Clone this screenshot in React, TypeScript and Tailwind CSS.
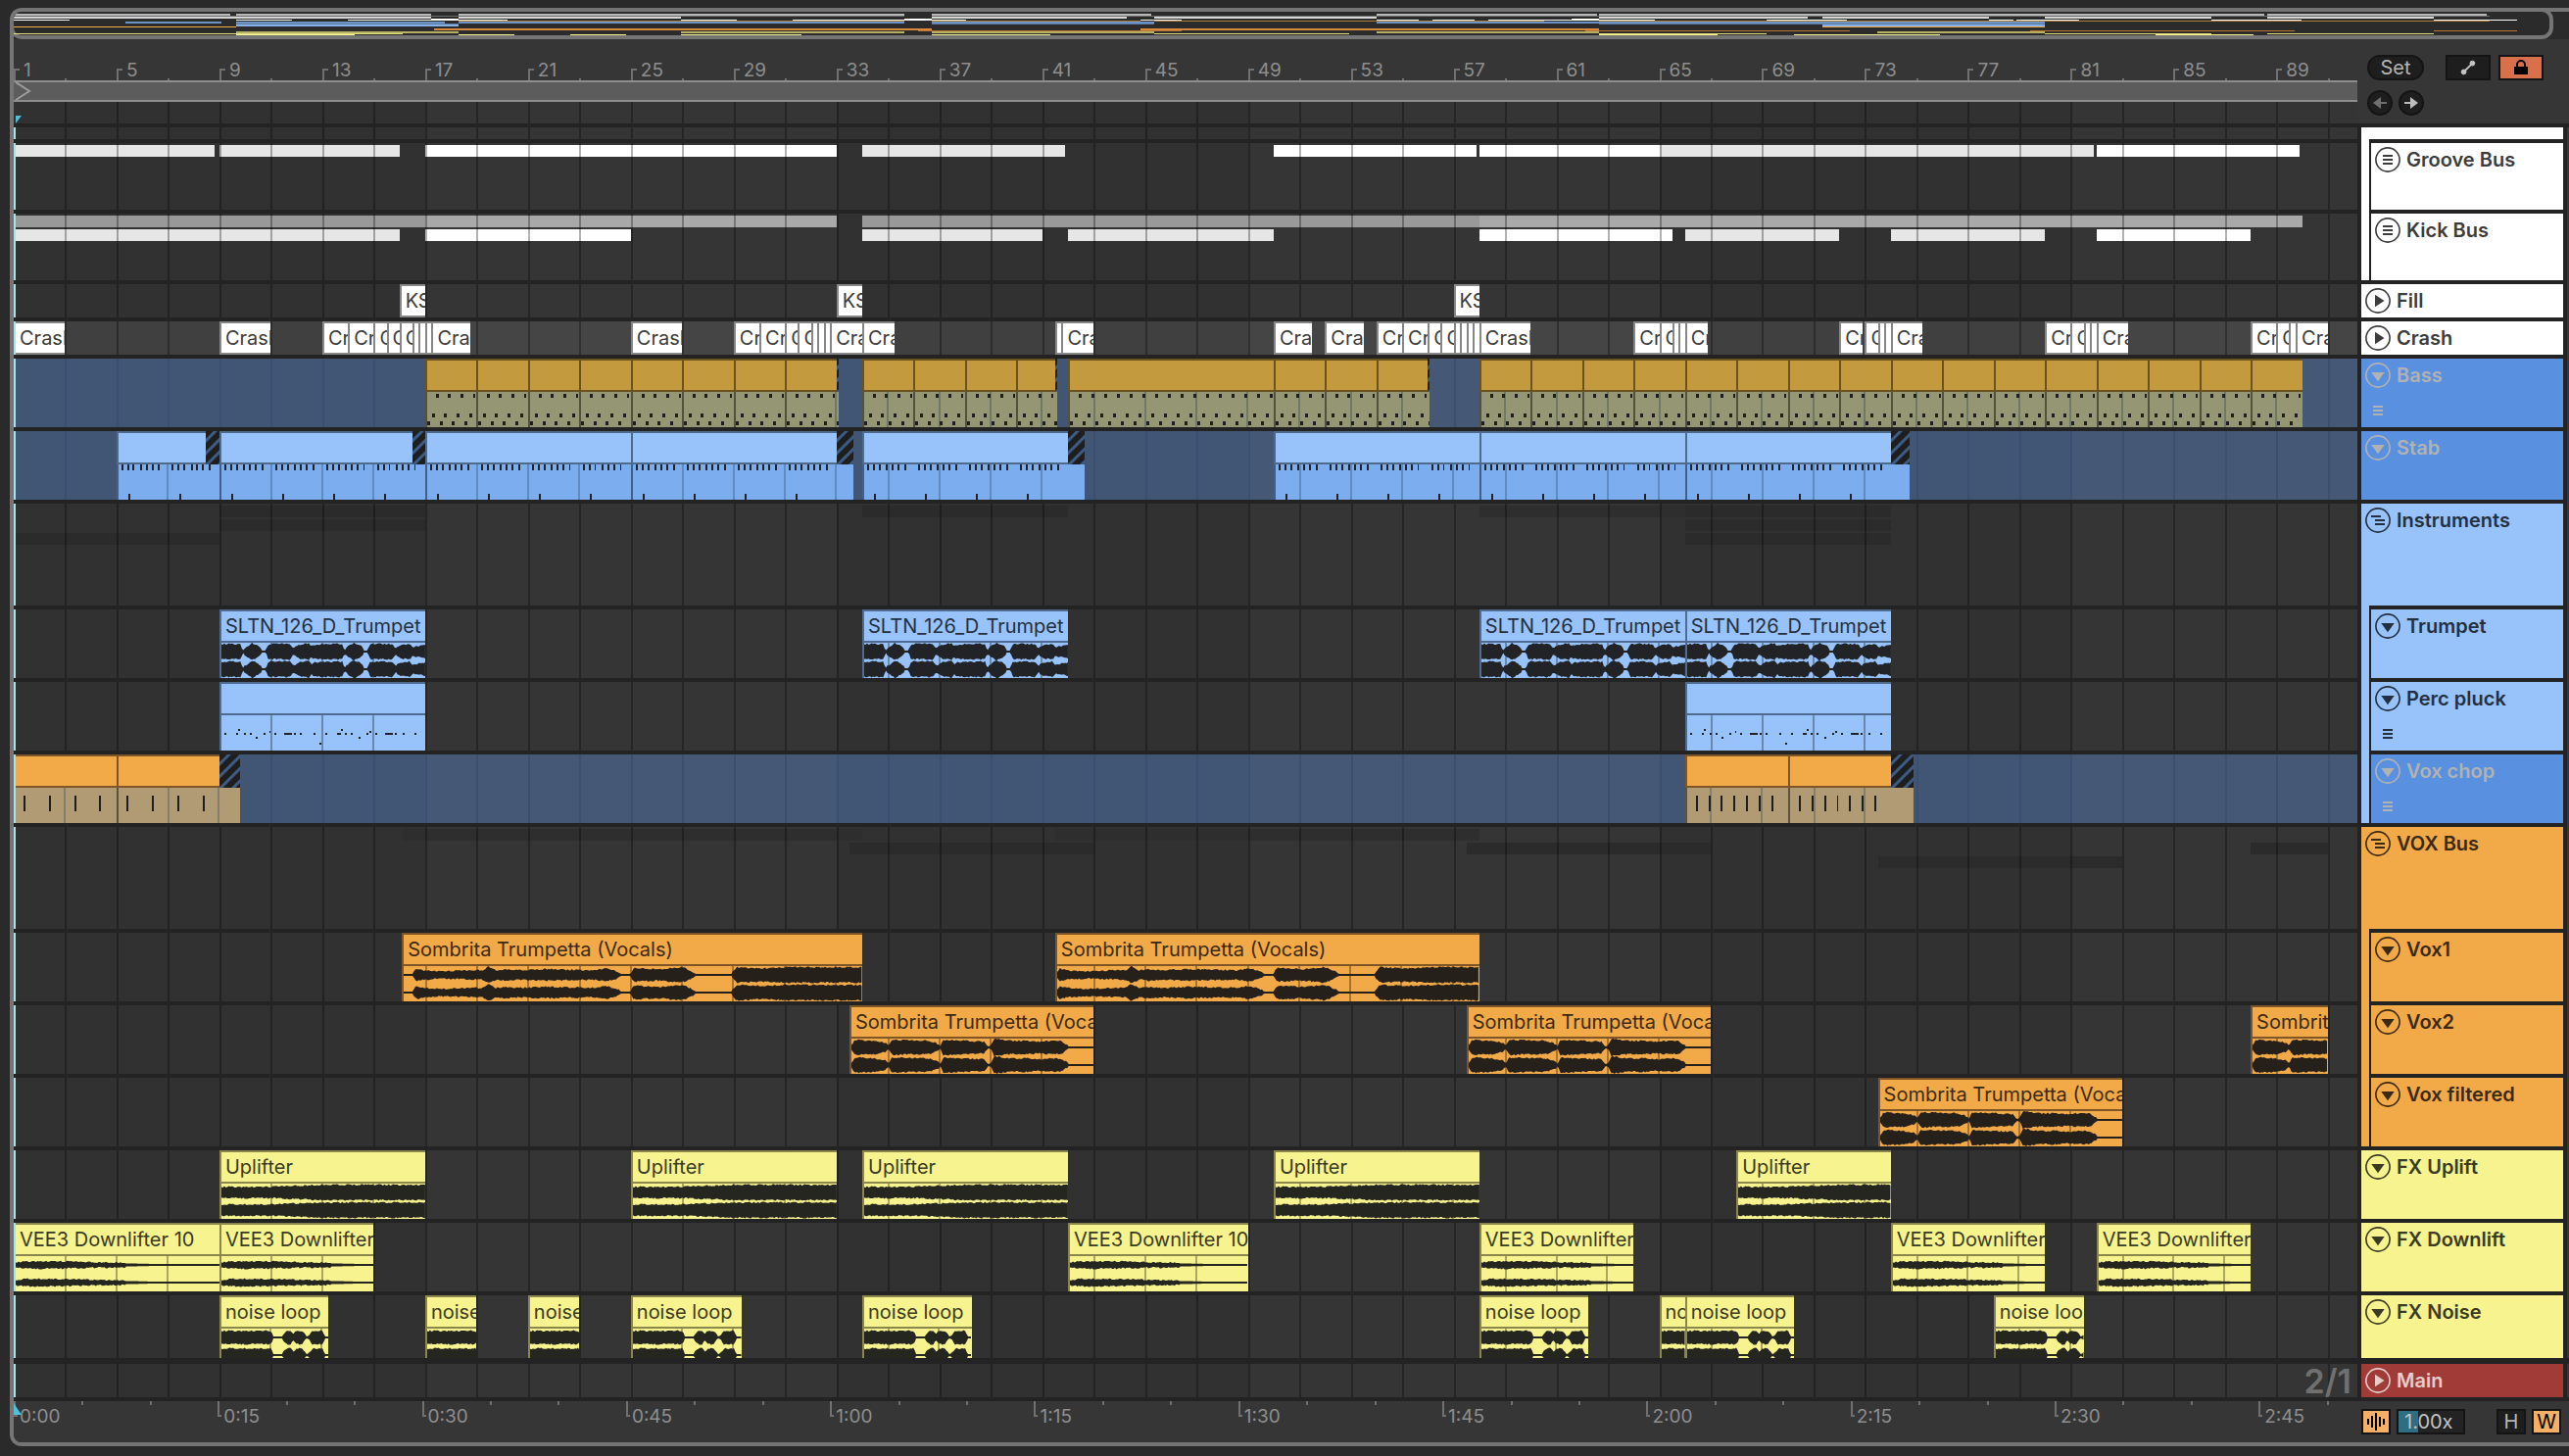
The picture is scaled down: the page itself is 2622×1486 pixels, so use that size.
import type { ReactNode } from 'react'

const BARS = 91.15
const BAR = 26.25 // drawing units per bar inside clip artwork

const pct = (bars: number) => `${(bars / BARS) * 100}%`

type Span = { at: number; len: number; tail?: number; name?: string; offset?: number }
type Tone = 'white' | 'gold' | 'sky' | 'skyMuted' | 'orange' | 'orangeMuted' | 'yellow'
type Art = 'bass' | 'stab' | 'trumpet' | 'pluck' | 'chop' | 'chopFast' | 'vox' | 'voxShort' | 'uplift' | 'downlift' | 'noise'

const tones: Record<Tone, { head: string; edge: string; body: string; bodyEdge: string; line: string; text: string; ink: string }> = {
  white: { head: 'bg-white', edge: 'border-[#878787]', body: 'bg-white', bodyEdge: 'border-[#878787]', line: 'bg-black/30', text: 'text-[#3c3c3c]', ink: 'fill-[#222]' },
  gold: { head: 'bg-[#c49a3f]', edge: 'border-[#6b5220]', body: 'bg-[#959674]', bodyEdge: 'border-[#52523c]', line: 'bg-[#6f7a66]', text: 'text-[#3d2e10]', ink: 'fill-[#1e1e1e]' },
  sky: { head: 'bg-[#98c2fa]', edge: 'border-[#4f6b8f]', body: 'bg-[#98c2fa]', bodyEdge: 'border-[#4f6b8f]', line: 'bg-[#6a87ae]', text: 'text-[#24303f]', ink: 'fill-[#212327]' },
  skyMuted: { head: 'bg-[#98c2fa]', edge: 'border-[#4f6b8a]', body: 'bg-[#7cadef]', bodyEdge: 'border-[#415f8a]', line: 'bg-[#5f8ac2]', text: 'text-[#24303f]', ink: 'fill-[#212327]' },
  orange: { head: 'bg-[#f2a948]', edge: 'border-[#7e5526]', body: 'bg-[#f2a948]', bodyEdge: 'border-[#7e5526]', line: 'bg-[#a67432]', text: 'text-[#3b2a12]', ink: 'fill-[#26201a]' },
  orangeMuted: { head: 'bg-[#f2a948]', edge: 'border-[#7e5526]', body: 'bg-[#b09b74]', bodyEdge: 'border-[#5e523e]', line: 'bg-[#848068]', text: 'text-[#3b2a12]', ink: 'fill-[#1e1e1e]' },
  yellow: { head: 'bg-[#f7f38f]', edge: 'border-[#8a864c]', body: 'bg-[#f7f38f]', bodyEdge: 'border-[#8a864c]', line: 'bg-[#aaa763]', text: 'text-[#3b3a22]', ink: 'fill-[#25261f]' },
}

// Amplitude envelopes as [bar, height] points
const envelopes: Record<string, [number, number][]> = {
  trumpet: [[0, 7], [0.75, 7], [0.83, 1], [1, 4], [1.2, 8], [1.45, 5], [1.6, 1], [1.75, 1], [1.85, 7], [2.7, 7], [2.83, 2], [3, 6], [3.45, 8], [3.52, 4], [3.6, 6], [4, 7], [4.75, 7], [4.83, 1], [5, 5], [5.2, 8], [5.45, 6], [5.6, 1], [5.75, 1], [5.85, 7], [6.7, 7], [6.83, 2], [7, 6], [7.4, 7], [7.5, 4], [8, 6]],
  vox: [[0, 1], [0.35, 1], [0.5, 6], [0.75, 4], [1.5, 3], [3.1, 4], [3.3, 8], [3.6, 4], [4, 5], [4.5, 4], [5.5, 5], [7.4, 4], [7.9, 6], [8.2, 4], [8.5, 1], [8.85, 1], [9, 6], [10, 5], [10.8, 7], [11, 6], [11.4, 1], [12.8, 1], [13, 7], [14, 6], [15, 7], [18, 7]],
  voxShort: [[0, 2], [0.15, 7], [0.9, 6], [1.35, 4], [1.45, 1], [1.6, 7], [2.5, 6], [3, 6], [3.3, 4], [3.5, 1], [3.6, 7], [4.5, 6], [5.2, 5], [5.35, 1], [5.5, 2], [5.6, 8], [6.2, 6], [7, 6], [7.4, 5], [7.6, 6], [8.2, 6], [8.5, 1], [9.5, 1]],
  uplift: [[0, 5], [2, 5], [4, 7], [8, 7]],
  downlift: [[0, 2], [0.5, 3], [1.5, 3], [3, 2], [4.3, 1.6], [5.5, 1], [8, 1]],
  noise: [[0, 6], [1.95, 6], [2.05, 1], [2.4, 1], [2.6, 6], [2.75, 6], [2.85, 2], [2.95, 6], [3.2, 6], [3.35, 1], [3.5, 2], [3.6, 6], [4, 6], [4.1, 1], [5, 1]],
}

function wavePath(points: [number, number][], span: number, center: number, offset: number) {
  const top: string[] = []
  const bottom: string[] = []
  const width = span * BAR
  for (let x = 0; x <= width; x += 1.5) {
    const bar = x / BAR + offset
    let i = 0
    while (i < points.length - 2 && points[i + 1][0] < bar) i++
    const [b0, a0] = points[i]
    const [b1, a1] = points[i + 1]
    const amp = a0 + (a1 - a0) * Math.min(1, (bar - b0) / (b1 - b0))
    const noise = (seed: number) => (amp > 1.6 ? Math.abs(Math.sin(x * seed + center) * 43.7) % 1.6 : 0)
    top.push(`${x.toFixed(1)},${(center - amp - noise(12.9)).toFixed(1)}`)
    bottom.unshift(`${x.toFixed(1)},${(center + amp + noise(7.3)).toFixed(1)}`)
  }
  return `M${top.join('L')}L${bottom.join('L')}Z`
}

const pluckNotes = [
  [3, 19, 2], [15, 19, 2], [17, 15, 2], [23, 19, 2], [29, 19, 2], [35, 23, 2], [43, 19, 2], [49, 17, 2], [55, 19, 2],
  [65, 19, 8], [75, 19, 2], [81, 19, 2], [95, 19, 2], [101, 29, 2], [107, 19, 2], [119, 19, 4], [123, 15, 2], [127, 19, 2],
  [133, 19, 2], [141, 23, 2], [149, 19, 2], [153, 17, 2], [159, 19, 2], [169, 19, 8], [179, 19, 2], [187, 19, 2], [199, 19, 2],
]

function notes(art: Art, span: number) {
  const out: number[][] = []
  if (art === 'bass') {
    for (let b = 0; b < span - 0.05; b += 0.5) {
      out.push([b * BAR + 9, 2, 3, 4], [b * BAR + 5, 22, 3, 4], [b * BAR, 30, 3, 4])
    }
  } else if (art === 'stab') {
    for (let b = 0; b < span - 0.8; b += 2) {
      for (const n of [0.1, 0.34, 0.56, 0.86, 1.08, 1.32, 1.56]) {
        if (b + n < span) out.push([(b + n) * BAR, 0, 2, 6])
      }
      out.push([(b + 0.4) * BAR, 30, 2, 6])
    }
  } else if (art === 'chop') {
    for (let b = 0; b < span - 0.9; b++) out.push([(b + 0.32) * BAR, 8, 2, 16])
  } else if (art === 'chopFast') {
    for (let n = 0; n < 7; n++) out.push([(n / 2 + 0.34) * BAR, 8, 2, 16])
  } else if (art === 'pluck') {
    pluckNotes.forEach(([x, y, w]) => out.push([x, y - 1, w, 2]))
  }
  return out
}

function Artwork({ art, span, ink, offset = 0 }: { art: Art; span: number; ink: string; offset?: number }) {
  const wave = envelopes[art]
  return (
    <svg
      className={`absolute left-0 top-0 h-9 w-full ${ink}`}
      viewBox={`0 0 ${span * BAR} 36`}
      preserveAspectRatio="none"
      aria-hidden="true"
    >
      {wave ? (
        <>
          <path d={wavePath(wave, span, 9, offset)} />
          <path d={wavePath(wave, span, 27, offset)} />
        </>
      ) : (
        notes(art, span).map(([x, y, w, h], i) => <rect key={i} x={x} y={y} width={w} height={h} shapeRendering="crispEdges" />)
      )}
    </svg>
  )
}

function Clip({ clip, tone, art }: { clip: Span; tone: Tone; art?: Art }) {
  const t = tones[tone]
  const span = clip.len + (clip.tail ?? 0)
  const box = { left: pct(clip.at), width: pct(span) }

  if (!art) {
    return (
      <div className={`absolute inset-y-0 overflow-hidden whitespace-nowrap border-y-2 border-l-2 pl-1 leading-[30px] ${t.head} ${t.edge} ${t.text}`} style={box}>
        {clip.name}
      </div>
    )
  }

  const lines: number[] = []
  for (let b = Math.floor(clip.at / 2) * 2 + 2; b < clip.at + span - 0.05; b += 2) lines.push(b)

  return (
    <div className="absolute inset-y-0 flex flex-col" style={box}>
      <div className="flex h-[34px] shrink-0">
        <div
          className={`overflow-hidden whitespace-nowrap border-y-2 border-l-2 pl-1 leading-[30px] ${t.head} ${t.edge} ${t.text}`}
          style={{ width: `${(clip.len / span) * 100}%` }}
        >
          {clip.name}
        </div>
        {clip.tail && (
          <div className="flex-1 bg-[repeating-linear-gradient(135deg,#1e1e1e_0px,#1e1e1e_5px,#3d5b82_6px,#3d5b82_8px,#1e1e1e_9px)]" />
        )}
      </div>
      <div className={`relative flex-1 overflow-hidden border-l-2 ${t.body} ${t.bodyEdge}`}>
        {lines.map((b) => (
          <span key={b} className={`absolute inset-y-0 -ml-0.5 w-0.5 ${t.line}`} style={{ left: `${((b - clip.at) / span) * 100}%` }} />
        ))}
        <Artwork art={art} span={span} ink={t.ink} offset={clip.offset} />
      </div>
    </div>
  )
}

const gridBars = Array.from({ length: 45 }, (_, i) => (i + 1) * 2)
const shades = [0, 16, 32, 48, 64, 80]

type LaneKind = 'plain' | 'light' | 'blue'

const laneColors: Record<LaneKind, { odd: string; even: string; line: string }> = {
  plain: { odd: 'bg-[#313131]', even: 'bg-[#353535]', line: 'bg-black/30' },
  light: { odd: 'bg-[#404040]', even: 'bg-[#454545]', line: 'bg-black/30' },
  blue: { odd: 'bg-[#415674]', even: 'bg-[#455977]', line: 'bg-[#3b5070]' },
}

function Lane({ height, kind = 'plain', playhead = true, strips, children }: { height: string; kind?: LaneKind; playhead?: boolean; strips?: ReactNode; children?: ReactNode }) {
  const c = laneColors[kind]
  return (
    <div className={`relative overflow-hidden ${height}`}>
      {shades.map((b, i) => (
        <div key={b} className={`absolute inset-y-0 ${i % 2 ? c.even : c.odd}`} style={{ left: pct(b), width: pct(16) }} />
      ))}
      {strips}
      {gridBars.map((b) => (
        <div key={b} className={`absolute inset-y-0 w-0.5 ${c.line}`} style={{ left: pct(b) }} />
      ))}
      {children}
      {playhead && <div className="absolute inset-y-0 left-0 w-0.5 bg-[#a6e3ee]" />}
    </div>
  )
}

type Strip = [start: number, end: number, row: number, color: string]

function Strips({ items }: { items: Strip[] }) {
  const rows = ['top-0.5', 'top-4', 'top-[30px]']
  return items.map(([start, end, row, color], i) => (
    <div key={i} className={`absolute h-3 ${rows[row]} ${color}`} style={{ left: pct(start), width: pct(end - start) }} />
  ))
}

const pale = 'bg-[#e6e6e6]'
const full = 'bg-white'
const shadow = 'bg-[#2b2b2b]'

const groove: Strip[] = [
  [0, 7.8, 0, pale], [8, 15, 0, pale], [16, 32, 0, full], [33, 40.9, 0, pale],
  [49, 56.9, 0, full], [57, 64, 0, full], [64, 80.9, 0, pale], [81, 88.9, 0, full],
]
const kickTop: Strip[] = [
  [0, 16, 0, 'bg-[#999]'], [16, 32, 0, 'bg-[#a9a9a9]'], [33, 57, 0, 'bg-[#999]'], [57, 89, 0, 'bg-[#a9a9a9]'],
]
const kick: Strip[] = [
  [0, 15, 1, pale], [16, 24, 1, full], [33, 40, 1, pale], [41, 49, 1, pale],
  [57, 64.5, 1, full], [65, 71, 1, pale], [73, 79, 1, pale], [81, 87, 1, full],
]
const instrumentStrips: Strip[] = [
  [0, 8, 2, shadow], [8, 16, 0, shadow], [8, 16, 1, shadow], [33, 41, 0, shadow],
  [57, 65, 0, 'bg-[#2e2e2e]'], [65, 73, 0, shadow], [65, 73, 1, shadow], [65, 73, 2, shadow],
]
const voxStrips: Strip[] = [
  [15.1, 33, 0, 'bg-[#2e2e2e]'], [40.5, 57, 0, 'bg-[#2e2e2e]'], [32.5, 42, 1, shadow],
  [56.5, 66, 1, shadow], [72.5, 82, 2, shadow], [87, 90, 1, shadow],
]

const named = (name: string, spans: [number, number][]): Span[] => spans.map(([at, end]) => ({ at, len: end - at, name }))

const fillClips = named('KSHMR', [[15, 16], [32, 33], [56, 57]])
const crashClips = [
  ...named('Crash', [
    [0, 2], [8, 10], [12, 13], [13, 14], [14, 14.5], [14.5, 15], [15, 15.5], [16.25, 17.75], [24, 26], [28, 29], [29, 30],
    [30, 30.5], [30.5, 31], [31.75, 33], [33, 34.25], [40.75, 42], [49, 50.5], [51, 52.5], [53, 54], [54, 55], [55, 55.5],
    [55.5, 56], [57, 59], [63, 64], [64, 64.5], [65, 65.9], [71, 71.9], [72, 72.5], [73, 74.25], [79, 80], [80, 80.5],
    [81, 82.25], [87, 88], [88, 88.5], [88.75, 90],
  ]),
  ...named('', [
    [15.5, 15.75], [15.75, 16], [16, 16.25], [31, 31.25], [31.25, 31.5], [31.5, 31.75], [40.5, 40.75], [56, 56.25],
    [56.25, 56.5], [56.5, 56.75], [56.75, 57], [64.5, 64.75], [64.75, 65], [72.5, 72.75], [72.75, 73], [80.5, 80.75],
    [80.75, 81], [88.5, 88.75],
  ]),
]

const pairs = (from: number, count: number): Span[] => Array.from({ length: count }, (_, i) => ({ at: from + i * 2, len: 2 }))
const bassClips: Span[] = [
  ...pairs(16, 7), { at: 30, len: 2, tail: 0.08 },
  ...pairs(33, 3), { at: 39, len: 1.5, tail: 0.08 },
  { at: 41, len: 8 }, ...pairs(49, 2), { at: 53, len: 2, tail: 0.08 },
  ...pairs(57, 16),
]
const stabClips: Span[] = [
  { at: 4, len: 3.45, tail: 0.55 }, { at: 8, len: 7.5, tail: 0.5 }, { at: 16, len: 8 }, { at: 24, len: 8, tail: 0.65 },
  { at: 33, len: 8, tail: 0.65 }, { at: 49, len: 8 }, { at: 57, len: 8 }, { at: 65, len: 8, tail: 0.75 },
]
const trumpetClips = named('SLTN_126_D_Trumpet', [[8, 16], [33, 41], [57, 65], [65, 73]])
const pluckClips: Span[] = [{ at: 8, len: 8 }, { at: 65, len: 8 }]
const chopClips: Span[] = [{ at: 0, len: 4 }, { at: 4, len: 4, tail: 0.8 }]
const chopFastClips: Span[] = [{ at: 65, len: 4 }, { at: 69, len: 4, tail: 0.9 }]
const vox1Clips: Span[] = [
  { at: 15.1, len: 17.9, name: 'Sombrita Trumpetta (Vocals)' },
  { at: 40.5, len: 16.5, name: 'Sombrita Trumpetta (Vocals)', offset: 0.4 },
]
const vox2Clips = named('Sombrita Trumpetta (Vocals)', [[32.5, 42], [56.5, 66], [87, 90]])
const voxFilteredClips = named('Sombrita Trumpetta (Vocals)', [[72.5, 82]])
const upliftClips = named('Uplifter', [[8, 16], [24, 32], [33, 41], [49, 57], [67, 73]])
const downliftClips = named('VEE3 Downlifter 10', [[0, 8], [8, 14], [41, 48], [57, 63], [73, 79], [81, 87]])
const noiseClips = named('noise loop', [[8, 12.25], [16, 18], [20, 22], [24, 28.3], [33, 37.25], [57, 61.25], [64, 65], [65, 69.25], [77, 80.5]])

function Clips({ items, tone, art }: { items: Span[]; tone: Tone; art?: Art }) {
  return items.map((clip) => <Clip key={clip.at} clip={clip} tone={tone} art={art} />)
}

const fromStrips = (items: Strip[]): Span[] => items.map(([start, end]) => ({ at: start, len: end - start }))

const overviewRows: { height: string; color: string; spans: Span[] }[] = [
  { height: 'h-0.5', color: 'bg-[#b9bab8]', spans: fromStrips(groove) },
  { height: 'h-px', color: 'bg-[#6c6c6c]', spans: fromStrips(kickTop) },
  { height: 'h-0.5', color: 'bg-[#d5d5d5]', spans: fromStrips(kick) },
  { height: 'h-px', color: 'bg-white', spans: fillClips },
  { height: 'h-px', color: 'bg-white', spans: crashClips },
  { height: 'h-px', color: 'bg-[#a9803a]', spans: bassClips },
  { height: 'h-0.5', color: 'bg-[#6c93c8]', spans: stabClips },
  { height: 'h-px', color: 'bg-[#5f7ba2]', spans: trumpetClips },
  { height: 'h-0.5', color: 'bg-[#86b0e8]', spans: pluckClips },
  { height: 'h-px', color: 'bg-[#f2a948]', spans: [...chopClips, ...chopFastClips] },
  { height: 'h-px', color: 'bg-transparent', spans: [] },
  { height: 'h-0.5', color: 'bg-[#d98a3c]', spans: vox1Clips },
  { height: 'h-px', color: 'bg-[#b87431]', spans: [...vox2Clips, ...voxFilteredClips] },
  { height: 'h-0.5', color: 'bg-[#b5b266]', spans: upliftClips },
  { height: 'h-px', color: 'bg-[#e6e27c]', spans: downliftClips },
  { height: 'h-px', color: 'bg-[#f7f38f]', spans: noiseClips },
]

function Overview() {
  return (
    <div className="mr-4 -ml-1 -mt-1 rounded-xl border-4 border-[#757575] pt-0.5">
      {overviewRows.map((row, i) => (
        <div key={i} className={`relative overflow-hidden ${row.height}`}>
          {row.spans.map((s) => (
            <span key={s.at} className={`absolute inset-y-0 ${row.color}`} style={{ left: pct(s.at), width: pct(s.len) }} />
          ))}
        </div>
      ))}
    </div>
  )
}

function BarRuler() {
  return (
    <div className="min-w-0 flex-1 text-[19px]">
      <div className="relative h-[42px] overflow-hidden">
        {Array.from({ length: 23 }, (_, i) => i * 4).map((b) => (
          <div key={b} className="absolute bottom-0 flex h-3 gap-1 border-l-2 border-[#707070]" style={{ left: pct(b) }}>
            <span className="h-0.5 w-1 bg-[#707070]" />
            <span className="-mt-3 leading-7 text-[#8e8e8e]">{b + 1}</span>
          </div>
        ))}
        {gridBars.filter((b) => b % 4 === 2).map((b) => (
          <div key={b} className="absolute bottom-0 h-0.5 w-0.5 bg-[#707070]" style={{ left: pct(b) }} />
        ))}
      </div>
      <div className="h-[22px] border-y-2 border-[#8e8e8e] bg-[#5c5c5c]">
        <svg className="h-[18px] w-5 fill-none stroke-[#9c9c9c] stroke-2" viewBox="0 0 20 18" aria-hidden="true">
          <path d="M2 0L16 9L2 18" />
        </svg>
      </div>
      <Lane height="h-[22px]" playhead={false}>
        <svg className="absolute bottom-0 left-0.5 h-2 w-1.5 fill-[#4fc0d8]" viewBox="0 0 6 8" aria-hidden="true">
          <path d="M0 0H6L0 8Z" />
        </svg>
      </Lane>
    </div>
  )
}

function TimeRuler() {
  const ticks = Array.from({ length: 35 }, (_, i) => i * 5)
  const toBars = (s: number) => (s * 127) / 240
  const label = (s: number) => `${Math.floor(s / 60)}:${String(s % 60).padStart(2, '0')}`
  return (
    <div className="relative h-[42px] min-w-0 flex-1 overflow-hidden text-[19px]">
      {ticks.map((s) =>
        s % 15 === 0 ? (
          <div key={s} className="absolute top-0 flex h-4 items-end border-l-2 border-[#707070]" style={{ left: pct(toBars(s)) }}>
            <span className="h-0.5 w-0.5 bg-[#707070]" />
            <span className="-mb-3 ml-0.5 leading-6 text-[#8e8e8e]">{label(s)}</span>
          </div>
        ) : (
          <div key={s} className="absolute top-0 h-1 w-0.5 bg-[#707070]" style={{ left: pct(toBars(s)) }} />
        ),
      )}
      <svg className="absolute left-0 top-0.5 h-3 w-2 fill-[#4fc0d8]" viewBox="0 0 8 12" aria-hidden="true">
        <path d="M0 0L8 12H0Z" />
      </svg>
    </div>
  )
}

type IconKind = 'down' | 'right' | 'list' | 'group'

function FoldIcon({ kind }: { kind: IconKind }) {
  return (
    <svg className="h-[26px] w-[26px] shrink-0 fill-current" viewBox="0 0 26 26" aria-hidden="true">
      <circle cx="13" cy="13" r="12.1" fill="none" stroke="currentColor" strokeWidth="1.6" />
      {kind === 'down' && <path d="M6.3 10H19.7L13 19.3Z" />}
      {kind === 'right' && <path d="M10 6.8L19.5 13L10 19.2Z" />}
      {kind === 'list' && <path d="M8 8h10v2H8zM8 12h10v2H8zM8 16h10v2H8z" />}
      {kind === 'group' && <path d="M6 8h10v2H6zM10 12h10v2H10zM10 16h10v2H10z" />}
    </svg>
  )
}

function TrackHeader({ name, icon, className, midi }: { name: string; icon: IconKind; className: string; midi?: boolean }) {
  return (
    <div className={`px-1 pt-1 ${className}`}>
      <button className="flex items-center gap-1.5 whitespace-nowrap font-semibold leading-[26px]">
        <FoldIcon kind={icon} />
        {name}
      </button>
      {midi && (
        <svg className="ml-2 mt-[18px] h-2.5 w-2.5 fill-current" viewBox="0 0 10 10" aria-hidden="true">
          <path d="M0 0h10v2H0zM0 4h10v2H0zM0 8h10v2H0z" />
        </svg>
      )}
    </div>
  )
}

function GroupChild({ children }: { children: ReactNode }) {
  return <div className="border-l-2 border-t-4 border-[#232323]">{children}</div>
}

const whiteHead = 'bg-white text-[#3c3c3c]'
const blueOff = 'bg-[#5a90e0] text-[#b2b2b2]'
const blueOn = 'bg-[#98c2fa] text-[#24303f]'
const orangeOn = 'bg-[#f2a948] text-[#3b2a12]'
const yellowOn = 'bg-[#f7f38f] text-[#3b3a22]'

function Headers() {
  return (
    <div className="mx-1 flex w-[206px] shrink-0 flex-col gap-1">
      <div className="bg-white pl-2 pt-3">
        <GroupChild><TrackHeader name="Groove Bus" icon="list" className={`h-[68px] ${whiteHead}`} /></GroupChild>
        <GroupChild><TrackHeader name="Kick Bus" icon="list" className={`h-[68px] ${whiteHead}`} /></GroupChild>
      </div>
      <TrackHeader name="Fill" icon="right" className={`h-[34px] ${whiteHead}`} />
      <TrackHeader name="Crash" icon="right" className={`h-[34px] ${whiteHead}`} />
      <TrackHeader name="Bass" icon="down" midi className={`h-[70px] ${blueOff}`} />
      <TrackHeader name="Stab" icon="down" className={`h-[70px] ${blueOff}`} />
      <div className="bg-[#98c2fa]">
        <TrackHeader name="Instruments" icon="group" className={`h-[104px] ${blueOn}`} />
        <div className="pl-2">
          <GroupChild><TrackHeader name="Trumpet" icon="down" className={`h-[70px] ${blueOn}`} /></GroupChild>
          <GroupChild><TrackHeader name="Perc pluck" icon="down" midi className={`h-[70px] ${blueOn}`} /></GroupChild>
          <GroupChild><TrackHeader name="Vox chop" icon="down" midi className={`h-[70px] ${blueOff}`} /></GroupChild>
        </div>
      </div>
      <div className="bg-[#f2a948]">
        <TrackHeader name="VOX Bus" icon="group" className={`h-[104px] ${orangeOn}`} />
        <div className="pl-2">
          <GroupChild><TrackHeader name="Vox1" icon="down" className={`h-[70px] ${orangeOn}`} /></GroupChild>
          <GroupChild><TrackHeader name="Vox2" icon="down" className={`h-[70px] ${orangeOn}`} /></GroupChild>
          <GroupChild><TrackHeader name="Vox filtered" icon="down" className={`h-[70px] ${orangeOn}`} /></GroupChild>
        </div>
      </div>
      <TrackHeader name="FX Uplift" icon="down" className={`h-[70px] ${yellowOn}`} />
      <TrackHeader name="FX Downlift" icon="down" className={`h-[70px] ${yellowOn}`} />
      <TrackHeader name="FX Noise" icon="down" className={`h-16 ${yellowOn}`} />
    </div>
  )
}

function Lanes() {
  return (
    <div className="flex min-w-0 flex-1 flex-col gap-1">
      <Lane height="h-3" />
      <Lane height="h-[68px]" strips={<Strips items={groove} />} />
      <Lane height="h-[68px]" strips={<Strips items={[...kickTop, ...kick]} />} />
      <Lane height="h-[34px]"><Clips items={fillClips} tone="white" /></Lane>
      <Lane height="h-[34px]" kind="light"><Clips items={crashClips} tone="white" /></Lane>
      <Lane height="h-[70px]" kind="blue"><Clips items={bassClips} tone="gold" art="bass" /></Lane>
      <Lane height="h-[70px]" kind="blue"><Clips items={stabClips} tone="skyMuted" art="stab" /></Lane>
      <Lane height="h-[104px]" strips={<Strips items={instrumentStrips} />} />
      <Lane height="h-[70px]"><Clips items={trumpetClips} tone="sky" art="trumpet" /></Lane>
      <Lane height="h-[70px]"><Clips items={pluckClips} tone="sky" art="pluck" /></Lane>
      <Lane height="h-[70px]" kind="blue">
        <Clips items={chopClips} tone="orangeMuted" art="chop" />
        <Clips items={chopFastClips} tone="orangeMuted" art="chopFast" />
      </Lane>
      <Lane height="h-[104px]" strips={<Strips items={voxStrips} />} />
      <Lane height="h-[70px]"><Clips items={vox1Clips} tone="orange" art="vox" /></Lane>
      <Lane height="h-[70px]"><Clips items={vox2Clips} tone="orange" art="voxShort" /></Lane>
      <Lane height="h-[70px]"><Clips items={voxFilteredClips} tone="orange" art="voxShort" /></Lane>
      <Lane height="h-[70px]"><Clips items={upliftClips} tone="yellow" art="uplift" /></Lane>
      <Lane height="h-[70px]"><Clips items={downliftClips} tone="yellow" art="downlift" /></Lane>
      <Lane height="h-16"><Clips items={noiseClips} tone="yellow" art="noise" /></Lane>
    </div>
  )
}

function Controls() {
  const box = 'flex h-[26px] items-center justify-center border-2 border-[#141414]'
  return (
    <div className="w-[216px] shrink-0 pl-2.5 pt-4">
      <div className="flex">
        <button className={`w-[58px] rounded-full bg-[#1e1e1e] text-[#b5b5b5] ${box}`}>Set</button>
        <button aria-label="Automation mode" className={`ml-[22px] w-[46px] bg-[#1e1e1e] ${box}`}>
          <svg className="h-4 w-4 fill-[#c4c4c4] stroke-[#c4c4c4]" viewBox="0 0 16 16">
            <circle cx="3.6" cy="12.4" r="2.4" />
            <circle cx="12.4" cy="3.6" r="2.4" />
            <path d="M3.6 12.4L12.4 3.6" strokeWidth="2" />
          </svg>
        </button>
        <button aria-label="Lock envelopes" className={`ml-2 w-[46px] bg-[#d8704c] ${box}`}>
          <svg className="h-4 w-4" viewBox="0 0 16 16">
            <path d="M1 7h14v8H1z" />
            <path d="M4 8V5a4 4 0 0 1 8 0v3" fill="none" stroke="black" strokeWidth="2" />
          </svg>
        </button>
      </div>
      <div className="mt-2.5 flex gap-1.5">
        <button aria-label="Previous locator" className={`w-[26px] rounded-full bg-[#1e1e1e] ${box}`}>
          <svg className="h-3.5 w-3.5 fill-[#707070]" viewBox="0 0 14 14"><path d="M0 7L8 1V6H14V8H8V13Z" /></svg>
        </button>
        <button aria-label="Next locator" className={`w-[26px] rounded-full bg-[#1e1e1e] ${box}`}>
          <svg className="h-3.5 w-3.5 fill-[#bdbdbd]" viewBox="0 0 14 14"><path d="M14 7L6 1V6H0V8H6V13Z" /></svg>
        </button>
      </div>
    </div>
  )
}

function Footer() {
  const box = 'flex h-[26px] items-center justify-center border-2 border-[#141414]'
  return (
    <div className="flex w-[216px] shrink-0 pl-1 pt-2">
      <button aria-label="Waveform zoom" className={`w-[30px] bg-[#f5b066] ${box}`}>
        <svg className="h-[18px] w-[18px] stroke-black stroke-2" viewBox="0 0 18 18">
          <path d="M1 6v6M5 3v12M9 0v18M13 4v10M17 6v6" />
        </svg>
      </button>
      <input
        aria-label="Waveform scale"
        readOnly
        value="1.00x"
        className="ml-1.5 h-[26px] w-[70px] border-2 border-[#141414] bg-[linear-gradient(to_right,#2f6d80_20px,#232323_20px)] pl-1.5 text-[#c4c4c4] outline-none"
      />
      <button className={`ml-8 w-[30px] bg-[#1e1e1e] text-[#b5b5b5] ${box}`}>H</button>
      <button className={`ml-1.5 w-[30px] bg-[#f5b066] text-black ${box}`}>W</button>
    </div>
  )
}

export default function App() {
  return (
    <div className="bg-[#2a2a2a] py-2 pb-2.5 pl-2.5 font-['Inter','Liberation_Sans',sans-serif] text-[20px]">
      <div className="overflow-hidden rounded-l-xl border-y-4 border-l-4 border-[#757575] bg-[#232323]">
        <div className="bg-[#363636]">
          <div className="bg-[#2b2b2b]">
            <Overview />
          </div>
          <div className="flex">
            <BarRuler />
            <Controls />
          </div>
        </div>
        <div className="mt-1 flex">
          <Lanes />
          <Headers />
          <div className="w-0.5 bg-[#363636]" />
        </div>
        <div className="mb-1 mt-1.5 flex">
          <div className="relative min-w-0 flex-1">
            <Lane height="h-[34px]" />
            <div className="absolute bottom-0 right-1.5 text-[34px] font-semibold leading-8 text-[#707070]">2/1</div>
          </div>
          <TrackHeader name="Main" icon="right" className="mx-1 h-[34px] w-[206px] shrink-0 bg-[#a03b38] text-[#e6cccb]" />
          <div className="w-0.5 bg-[#363636]" />
        </div>
        <div className="flex bg-[#363636]">
          <TimeRuler />
          <Footer />
        </div>
      </div>
    </div>
  )
}
